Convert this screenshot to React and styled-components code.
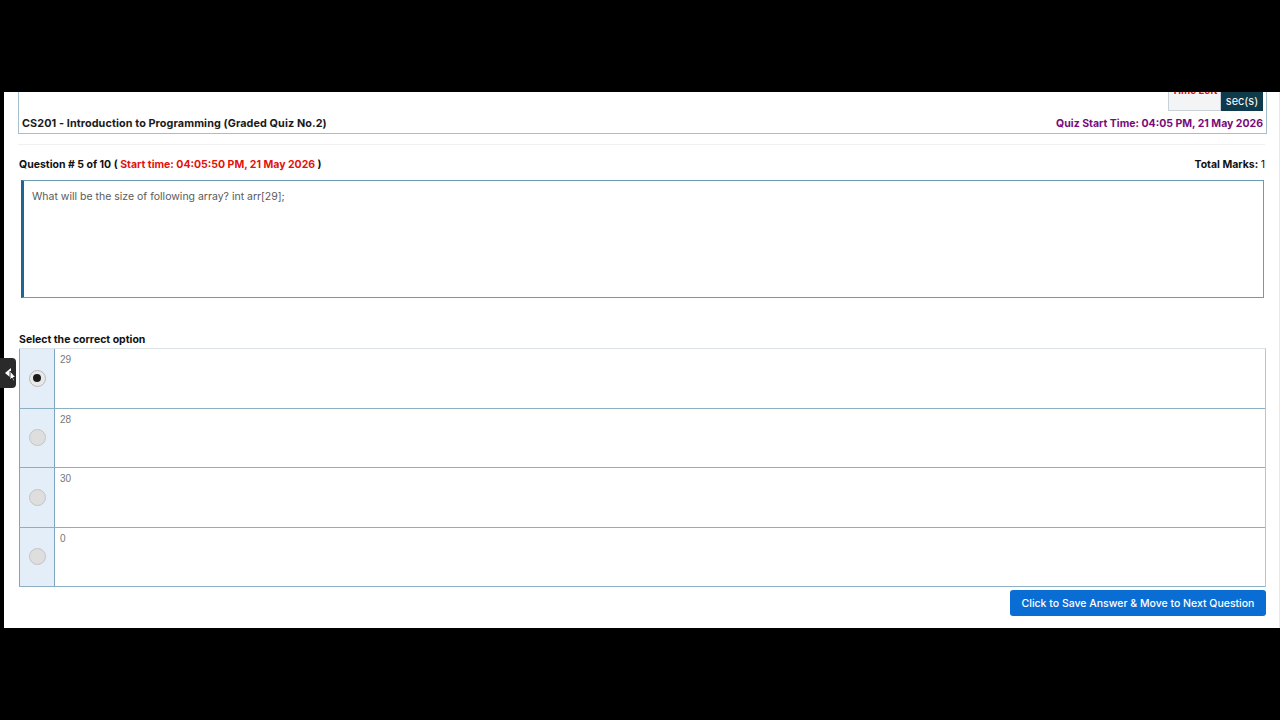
import React from 'react';
import styled, { createGlobalStyle } from 'styled-components';

const GlobalStyle = createGlobalStyle`
  html, body {
    margin: 0;
    padding: 0;
    background: #000;
  }
  body {
    font-family: 'Inter', 'Liberation Sans', sans-serif;
  }
`;

const options = [
  { label: '29', checked: true },
  { label: '28' },
  { label: '30' },
  { label: '0' },
];

export default function App() {
  return (
    <>
      <GlobalStyle />
      <Screen>
        <SideTab>
          <svg width='16' height='30' viewBox='0 0 16 30'>
            <path d='M5 15 L11 10 L11 20 Z' fill='#fff' />
            <path
              d='M10 13 L10 22 L12 20 L13.5 23 L14.6 22.5 L13.2 19.6 L15.8 19.4 Z'
              fill='#fff'
              stroke='#111'
              strokeWidth='0.8'
            />
          </svg>
        </SideTab>
        <Page>
          <HeaderPanel>
            <TimerRow>
              <Timer>
                <TimerLabel>Time Left</TimerLabel>
                <TimerUnit>sec(s)</TimerUnit>
              </Timer>
            </TimerRow>
            <TitleRow>
              <CourseTitle>CS201 - Introduction to Programming (Graded Quiz No.2)</CourseTitle>
              <QuizStart>Quiz Start Time: 04:05 PM, 21 May 2026</QuizStart>
            </TitleRow>
          </HeaderPanel>
          <Divider />
          <QuestionRow>
            <QuestionLabel>
              Question # 5 of 10 ( <Red>Start time: 04:05:50 PM, 21 May 2026</Red> )
            </QuestionLabel>
            <Marks>
              Total Marks: <span>1</span>
            </Marks>
          </QuestionRow>
          <QuestionBox>What will be the size of following array? int arr[29];</QuestionBox>
          <SelectLabel>Select the correct option</SelectLabel>
          <OptionTable>
            {options.map((o) => (
              <OptionRow key={o.label}>
                <RadioCell>
                  <Radio checked={o.checked} />
                </RadioCell>
                <OptionText>{o.label}</OptionText>
              </OptionRow>
            ))}
          </OptionTable>
          <ButtonRow>
            <SaveButton>Click to Save Answer &amp; Move to Next Question</SaveButton>
          </ButtonRow>
        </Page>
      </Screen>
    </>
  );
}

const Screen = styled.div`
  position: relative;
  height: 720px;
  padding-top: 92px;
  box-sizing: border-box;
  background: #000;
`;

const SideTab = styled.div`
  position: absolute;
  left: 0;
  top: 358px;
  width: 16px;
  height: 30px;
  background: #2a2a2a;
  border-radius: 0 4px 4px 0;
  z-index: 2;
  svg {
    display: block;
  }
`;

const Page = styled.div`
  margin-left: 4px;
  height: 536px;
  background: #fff;
  overflow: hidden;
  padding: 0 13px 0 14px;
  box-sizing: border-box;
  box-shadow: inset -10px 0 0 -9px #e6e9eb;
`;

const HeaderPanel = styled.div`
  margin-top: -30px;
  border: 1px solid #a5bfcd;
  padding: 0 3px 3px 3px;
`;

const TimerRow = styled.div`
  display: flex;
  justify-content: flex-end;
`;

const Timer = styled.div`
  display: flex;
  height: 48px;
`;

const TimerLabel = styled.div`
  width: 53px;
  box-sizing: border-box;
  background: #f3f4f5;
  border: 1px solid #c9d1d6;
  color: #e01010;
  font-size: 10px;
  font-weight: 700;
  text-align: center;
  padding-top: 20px;
`;

const TimerUnit = styled.div`
  width: 42px;
  background: #0f3a4c;
  color: #fff;
  font-size: 11px;
  display: flex;
  align-items: flex-end;
  justify-content: center;
  padding-bottom: 3px;
  box-sizing: border-box;
`;

const TitleRow = styled.div`
  display: flex;
  justify-content: space-between;
  align-items: center;
  margin-top: 5px;
  height: 14px;
`;

const CourseTitle = styled.div`
  font-size: 10.8px;
  font-weight: 700;
  color: #1a1a1a;
  letter-spacing: 0.1px;
`;

const QuizStart = styled.div`
  font-size: 10.5px;
  font-weight: 700;
  color: #7a0a7a;
`;

const Divider = styled.div`
  height: 1px;
  background: #eef0f2;
  margin: 10px 2px 0 0;
`;

const QuestionRow = styled.div`
  display: flex;
  justify-content: space-between;
  align-items: center;
  height: 14px;
  margin-top: 12px;
  padding: 0 2px 0 1px;
`;

const QuestionLabel = styled.div`
  font-size: 10.5px;
  font-weight: 700;
  color: #111;
`;

const Red = styled.span`
  color: #e3120b;
`;

const Marks = styled.div`
  font-size: 10.5px;
  font-weight: 700;
  color: #111;
  span {
    font-weight: 400;
  }
`;

const QuestionBox = styled.div`
  margin: 9px 3px 0 3px;
  height: 118px;
  box-sizing: border-box;
  border: 1px solid #6e9ab2;
  border-left: 3px solid #1d6792;
  padding: 9px 8px;
  font-size: 10.5px;
  color: #5a5a5a;
`;

const SelectLabel = styled.div`
  margin-top: 35px;
  padding-left: 1px;
  font-size: 10.5px;
  font-weight: 700;
  color: #111;
  height: 14px;
`;

const OptionTable = styled.div`
  margin: 1px 1px 0 1px;
  border-top: 1px solid #d8e2e8;
  border-right: 1px solid #b4c8d4;
`;

const OptionRow = styled.div`
  display: flex;
  height: 59.5px;
  box-sizing: border-box;
  border-bottom: 1px solid #8dafc4;
`;

const RadioCell = styled.div`
  width: 36px;
  flex: none;
  box-sizing: border-box;
  background: #e4eef8;
  border-left: 1px solid #7ea5c0;
  border-right: 1px solid #7ea5c0;
  display: flex;
  align-items: center;
  justify-content: center;
`;

const Radio = styled.span`
  width: 17px;
  height: 17px;
  border-radius: 50%;
  box-sizing: border-box;
  background: ${({ checked }) => (checked ? '#e9e9e9' : '#dedede')};
  border: 1px solid ${({ checked }) => (checked ? '#b9b9b9' : '#c4c4c4')};
  display: flex;
  align-items: center;
  justify-content: center;
  &::after {
    content: '';
    display: ${({ checked }) => (checked ? 'block' : 'none')};
    width: 8px;
    height: 8px;
    border-radius: 50%;
    background: #1b1b1b;
  }
`;

const OptionText = styled.div`
  padding: 5px 5px;
  font-size: 10px;
  color: #777;
  font-family: 'Liberation Sans', Arial, sans-serif;
`;

const ButtonRow = styled.div`
  display: flex;
  justify-content: flex-end;
  margin: 3px 1px 0 0;
`;

const SaveButton = styled.button`
  width: 256px;
  height: 26px;
  border: 0;
  border-radius: 3px;
  background: #0a6dd3;
  color: #fff;
  font-family: 'Inter', 'Liberation Sans', sans-serif;
  font-size: 10.5px;
  font-weight: 500;
  cursor: pointer;
`;
